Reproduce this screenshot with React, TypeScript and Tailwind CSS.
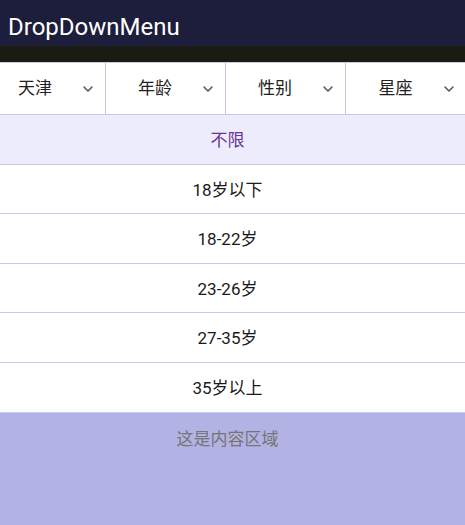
import { ChevronDown } from "lucide-react";

const tabs = ["天津", "年龄", "性别", "星座"];
const ages = ["不限", "18岁以下", "18-22岁", "23-26岁", "27-35岁", "35岁以上"];

export default function App() {
  return (
    <div
      className="flex h-[525px] w-[465px] flex-col overflow-hidden bg-[#b3b2e4]"
      style={{ fontFamily: 'Roboto, "Noto Sans CJK SC", sans-serif' }}
    >
      <div className="flex h-[46px] items-end bg-[#1d1d3c] px-2 pb-[7px]">
        <h1 className="text-[24px] leading-none text-white">DropDownMenu</h1>
      </div>
      <div className="h-[16px] bg-[#1c1b12]" />

      <div className="flex h-[53px] border-y border-[#c8c8e8] bg-white">
        <div className="ml-[-14px] flex">
          {tabs.map((t, i) => (
            <div
              key={t}
              className={`flex w-[120px] items-center ${i < 3 ? "border-r border-[#c4c4f4]" : ""}`}
            >
              <span className="flex-1 pl-[1px] text-center text-[17px] text-[#222]">{t}</span>
              <span className="w-[22px]">
                <ChevronDown size={16} strokeWidth={2.4} className="-ml-[3px] text-[#5a5a5a]" />
              </span>
            </div>
          ))}
        </div>
      </div>

      <div className="flex flex-col bg-white">
        {ages.map((a, i) => (
          <div
            key={a}
            className={`flex h-[49.6px] items-center justify-center pt-[3px] pr-[10px] text-[17px] ${
              i === 0 ? "bg-[#ececfc] text-[#6a3494]" : "text-[#1a1a1a]"
            } border-b border-[#c8c8ee]`}
          >
            {a}
          </div>
        ))}
      </div>

      <div className="flex justify-center pt-[14px] pr-[10px] text-[17px] text-[#757575]">这是内容区域</div>
    </div>
  );
}
